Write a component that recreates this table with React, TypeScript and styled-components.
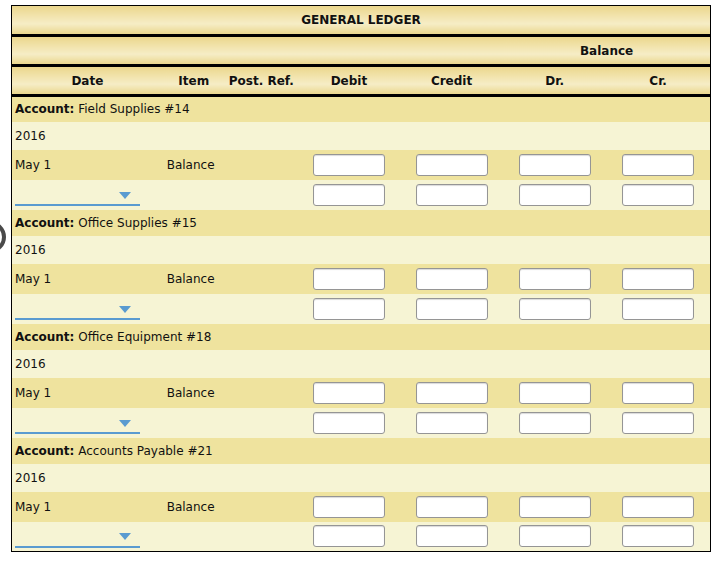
import React from "react";
import styled, { createGlobalStyle } from "styled-components";

const Global = createGlobalStyle`
  html, body { margin: 0; padding: 0; background: #ffffff; }
  body { font-family: "DejaVu Sans", Verdana, sans-serif; color: #111; }
`;

const Page = styled.div`
  position: relative;
  padding: 5px 0 0 11px;
  width: 723px;
  height: 567px;
  box-sizing: border-box;
  overflow: hidden;
`;

const EdgeMark = styled.div`
  position: absolute;
  left: -26px;
  top: 221px;
  width: 24px;
  height: 24px;
  border: 4px solid #4a4a4a;
  border-radius: 50%;
`;

const Table = styled.table`
  border-collapse: collapse;
  table-layout: fixed;
  width: 700px;
  border: 1px solid #000;
`;

const HeadRow = styled.tr`
  height: 30px;
  border-bottom: 3px solid #000;
`;

const HeadCell = styled.th`
  padding: 0;
  font-size: 12px;
  font-weight: bold;
  text-align: center;
  vertical-align: middle;
  background: linear-gradient(#ebd78e 0%, #f2e4ae 35%, #f6edc6 62%, #e9d68c 100%);
  color: #111;
`;

const BodyRow = styled.tr<{ $h: number; $dark: boolean }>`
  height: ${(p) => p.$h}px;
  background: ${(p) => (p.$dark ? "#efe39e" : "#f6f4d4")};
`;

const Cell = styled.td<{ $center?: boolean }>`
  padding: 0 0 0 ${(p) => (p.$center ? 0 : 3)}px;
  font-size: 12px;
  text-align: ${(p) => (p.$center ? "center" : "left")};
  vertical-align: middle;
  white-space: nowrap;
  overflow: visible;
`;

const ItemCell = styled(Cell)`
  padding-left: 4px;
`;

const Bold = styled.b`
  font-weight: bold;
`;

const Box = styled.input`
  display: inline-block;
  width: 72px;
  height: 22px;
  box-sizing: border-box;
  border: 1px solid #959595;
  border-radius: 3px;
  background: #fff;
  box-shadow: inset 0 1px 1px rgba(0, 0, 0, 0.15);
  vertical-align: middle;
  margin: 0;
  padding: 0;
`;

const Drop = styled.div`
  width: 125px;
  height: 22px;
  box-sizing: border-box;
  border-bottom: 2px solid #5a9bd0;
  display: flex;
  justify-content: flex-end;
  align-items: center;
  padding: 2px 9px 0 0;
  margin-top: 1px;
`;

const Arrow = styled.span`
  width: 0;
  height: 0;
  border-left: 6.5px solid transparent;
  border-right: 6.5px solid transparent;
  border-top: 7px solid #5a9bd0;
`;

const accounts = [
  "Field Supplies #14",
  "Office Supplies #15",
  "Office Equipment #18",
  "Accounts Payable #21",
];

const widths = [151, 62, 73, 102, 103, 103, 104];

const Inputs = () => (
  <>
    {[0, 1, 2, 3].map((i) => (
      <Cell key={i} $center>
        <Box />
      </Cell>
    ))}
  </>
);

export default function App() {
  return (
    <Page>
      <Global />
      <EdgeMark />
      <Table>
        <colgroup>
          {widths.map((w, i) => (
            <col key={i} style={{ width: w }} />
          ))}
        </colgroup>
        <thead>
          <HeadRow>
            <HeadCell colSpan={7}>GENERAL LEDGER</HeadCell>
          </HeadRow>
          <HeadRow>
            <HeadCell colSpan={5} />
            <HeadCell colSpan={2}>Balance</HeadCell>
          </HeadRow>
          <HeadRow>
            <HeadCell>Date</HeadCell>
            <HeadCell>Item</HeadCell>
            <HeadCell>Post. Ref.</HeadCell>
            <HeadCell>Debit</HeadCell>
            <HeadCell>Credit</HeadCell>
            <HeadCell>Dr.</HeadCell>
            <HeadCell>Cr.</HeadCell>
          </HeadRow>
        </thead>
        <tbody>
          {accounts.map((a) => (
            <React.Fragment key={a}>
              <BodyRow $h={26} $dark>
                <Cell colSpan={7}>
                  <Bold>Account:</Bold> {a}
                </Cell>
              </BodyRow>
              <BodyRow $h={28} $dark={false}>
                <Cell colSpan={7}>2016</Cell>
              </BodyRow>
              <BodyRow $h={30} $dark>
                <Cell>May 1</Cell>
                <ItemCell>Balance</ItemCell>
                <Cell />
                <Inputs />
              </BodyRow>
              <BodyRow $h={30} $dark={false}>
                <Cell>
                  <Drop>
                    <Arrow />
                  </Drop>
                </Cell>
                <Cell />
                <Cell />
                <Inputs />
              </BodyRow>
            </React.Fragment>
          ))}
        </tbody>
      </Table>
    </Page>
  );
}
